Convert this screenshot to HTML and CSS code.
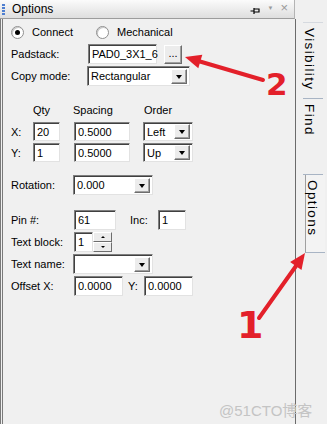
FILE: index.html
```html
<!DOCTYPE html>
<html lang="en">
<head>
    <meta charset="UTF-8">
    <meta name="viewport" content="width=device-width, initial-scale=1.0">
    <title>Options</title>
    <link rel="stylesheet" href="styles.css">
</head>
<body>
<div class="app">
    <div class="panel">
        <div class="titlebar">
            <span class="grip"></span>
            <span class="title">Options</span>
            <span class="tb-icons">
                <svg class="pin" width="10" height="8" viewBox="0 0 10 8"><path d="M0.5 4H4M4 1V7M4 2H9V5H4" fill="none" stroke="#000" stroke-width="1.2"/></svg>
                <span class="tb-arrow">▼</span>
                <span class="tb-close">×</span>
            </span>
        </div>
        <div class="content">
            <div class="row r-radio">
                <span class="radio on"></span><span class="radio-text">Connect</span>
                <span class="radio second"></span><span class="radio-text">Mechanical</span>
            </div>
            <div class="row r-pad">
                <span class="lbl l-pad">Padstack:</span>
                <span class="field f-pad">PAD0_3X1_6</span>
                <span class="btn">...</span>
            </div>
            <div class="row">
                <span class="lbl l-copy">Copy mode:</span>
                <span class="combo c-copy"><span class="combo-text">Rectangular</span><span class="drop"></span></span>
            </div>
            <div class="row r-head">
                <span class="h-qty">Qty</span>
                <span class="h-spacing">Spacing</span>
                <span class="h-order">Order</span>
            </div>
            <div class="row r-grid r-x">
                <span class="lbl l-axis">X:</span>
                <span class="field f-qty">20</span>
                <span class="field f-spacing">0.5000</span>
                <span class="combo c-order"><span class="combo-text">Left</span><span class="drop"></span></span>
            </div>
            <div class="row r-grid">
                <span class="lbl l-axis">Y:</span>
                <span class="field f-qty">1</span>
                <span class="field f-spacing">0.5000</span>
                <span class="combo c-order"><span class="combo-text">Up</span><span class="drop"></span></span>
            </div>
            <div class="row r-rot">
                <span class="lbl l-rot">Rotation:</span>
                <span class="combo c-rot"><span class="combo-text">0.000</span><span class="drop"></span></span>
            </div>
            <div class="row r-pin">
                <span class="lbl l-pin">Pin #:</span>
                <span class="field f-pin">61</span>
                <span class="lbl l-inc">Inc:</span>
                <span class="field f-inc">1</span>
            </div>
            <div class="row">
                <span class="lbl l-pin">Text block:</span>
                <span class="field f-block">1</span>
                <span class="spin"><span class="spin-up"></span><span class="spin-down"></span></span>
            </div>
            <div class="row">
                <span class="lbl l-rot">Text name:</span>
                <span class="combo c-rot"><span class="combo-text"></span><span class="drop"></span></span>
            </div>
            <div class="row">
                <span class="lbl l-pin">Offset X:</span>
                <span class="field f-off">0.0000</span>
                <span class="lbl l-offy">Y:</span>
                <span class="field f-off">0.0000</span>
            </div>
        </div>
    </div>
    <div class="tabs">
        <div class="tab t-vis"><span class="tab-text">Visibility</span></div>
        <div class="tab t-find"><span class="tab-text">Find</span></div>
        <div class="tab t-opt active"><span class="tab-text">Options</span></div>
    </div>
</div>

<!-- callouts drawn over the screenshot -->
<svg class="marks" width="327" height="424" viewBox="0 0 327 424">
    <line x1="263" y1="80" x2="200" y2="61.5" stroke="#e3202a" stroke-width="4" stroke-linecap="round"/>
    <polygon points="185,57 202.3,54.8 198.3,68.2" fill="#e3202a"/>
    <text x="266" y="95" class="num num-2">2</text>
    <line x1="259" y1="318" x2="296" y2="266" stroke="#e3202a" stroke-width="4" stroke-linecap="round"/>
    <polygon points="305,253 301.5,270.1 290.1,262.1" fill="#e3202a"/>
    <text x="237" y="338" class="num num-1">1</text>
</svg>
<div class="watermark">@51CTO博客</div>
</body>
</html>
```

FILE: styles.css
```css
body {
    margin: 0;
    width: 327px;
    height: 424px;
    overflow: hidden;
    position: relative;
    background: #f0f0f0;
    font-family: "Liberation Sans", Arial, sans-serif;
    font-size: 11px;
    color: #000;
}

.app {
    display: flex;
    height: 424px;
}

.panel {
    width: 296px;
    display: flex;
    flex-direction: column;
}

.titlebar {
    height: 18px;
    display: flex;
    align-items: center;
    background: linear-gradient(#fbfbfb, #dedede);
    border-right: 1px solid #b4b4b4;
    border-bottom: 1px solid #9c9c9c;
    margin-right: 1px;
}

.grip {
    width: 3px;
    height: 11px;
    margin-left: 2px;
    background: repeating-linear-gradient(#4f7fd0 0 2px, transparent 2px 3px);
}

.title {
    margin-left: 7px;
    font-size: 12px;
}

.tb-icons {
    margin-left: auto;
    display: flex;
    align-items: center;
    gap: 7px;
    margin-right: 6px;
}

.pin {
    margin-top: 3px;
}

.tb-arrow {
    font-size: 6px;
    color: #9a9a9a;
    margin-top: -3px;
}

.tb-close {
    font-size: 13px;
    color: #9a9a9a;
    margin-top: -3px;
}

.content {
    flex: 1;
    border-left: 3px double #7a7a7a;
    border-right: 1px solid #6b6b6b;
    padding-left: 8px;
}

.row {
    display: flex;
    align-items: center;
    height: 22px;
}

.lbl {
    flex: none;
}

.r-radio {
    height: 18px;
    margin-top: 4px;
}

.radio {
    width: 11px;
    height: 11px;
    border-radius: 50%;
    background: #fff;
    border: 1px solid #8f8f8f;
    box-shadow: inset 1px 1px 0 #c8c8c8;
    position: relative;
}

.radio.on::after {
    content: "";
    position: absolute;
    left: 3px;
    top: 3px;
    width: 5px;
    height: 5px;
    border-radius: 50%;
    background: #000;
}

.radio.second {
    margin-left: 23px;
}

.radio-text {
    margin-left: 8px;
}

.r-pad {
    margin-top: 2px;
}

.field,
.combo {
    height: 20px;
    box-sizing: border-box;
    background: #fff;
    border: 1px solid;
    border-color: #7e7e7e #e2e2e2 #e2e2e2 #7e7e7e;
    box-shadow: inset 1px 1px 0 #404040;
    display: flex;
    align-items: center;
    padding-left: 3px;
    flex: none;
}

.combo {
    padding-right: 2px;
}

.combo-text {
    flex: 1;
}

.drop {
    width: 16px;
    height: 15px;
    box-sizing: border-box;
    background: #ececec;
    border: 1px solid;
    border-color: #fff #6d6d6d #6d6d6d #fff;
    box-shadow: inset -1px -1px 0 #a0a0a0;
    position: relative;
}

.drop::after {
    content: "";
    position: absolute;
    left: 4px;
    top: 5px;
    border-left: 3.5px solid transparent;
    border-right: 3.5px solid transparent;
    border-top: 4px solid #000;
}

.l-pad {
    width: 77px;
}

.f-pad {
    width: 69px;
}

.btn {
    width: 18px;
    height: 19px;
    box-sizing: border-box;
    margin-left: 7px;
    background: #ececec;
    border: 1px solid;
    border-color: #fff #6d6d6d #6d6d6d #fff;
    box-shadow: inset -1px -1px 0 #a0a0a0;
    text-align: center;
    line-height: 14px;
}

.l-copy {
    width: 76px;
}

.c-copy {
    width: 103px;
}

.r-head {
    height: 14px;
    margin-top: 16px;
}

.h-qty {
    margin-left: 22px;
    width: 40px;
}

.h-spacing {
    width: 71px;
}

.r-x {
    margin-top: 4px;
}

.r-grid {
    height: 21px;
}

.r-grid .field,
.r-grid .combo {
    height: 19px;
}

.l-axis {
    width: 22px;
}

.f-qty {
    width: 27px;
}

.f-spacing {
    width: 56px;
    margin-left: 14px;
}

.c-order {
    width: 50px;
    margin-left: 13px;
}

.r-rot {
    margin-top: 11px;
}

.l-rot {
    width: 62px;
}

.c-rot {
    width: 80px;
}

.r-pin {
    margin-top: 13px;
}

.l-pin {
    width: 63px;
}

.f-pin {
    width: 42px;
}

.l-inc {
    width: 28px;
    margin-left: 14px;
}

.f-inc {
    width: 28px;
}

.f-block {
    width: 19px;
}

.spin {
    width: 19px;
    height: 20px;
    display: flex;
    flex-direction: column;
}

.spin-up,
.spin-down {
    flex: 1;
    background: #ececec;
    border: 1px solid;
    border-color: #fff #6d6d6d #6d6d6d #fff;
    position: relative;
}

.spin-up::after,
.spin-down::after {
    content: "";
    position: absolute;
    left: 7px;
    top: 3px;
    border-left: 2px solid transparent;
    border-right: 2px solid transparent;
}

.spin-up::after {
    border-bottom: 2px solid #000;
}

.spin-down::after {
    border-top: 2px solid #000;
    top: 3px;
}

.f-off {
    width: 49px;
}

.l-offy {
    width: 16px;
    margin-left: 5px;
}

.tabs {
    flex: 1;
    padding-top: 22px;
    padding-left: 7px;
}

.tab {
    width: 20px;
    border-top: 1px solid #d5d9df;
    border-bottom: 1px solid #a8b4c4;
    box-sizing: border-box;
    padding-top: 5px;
}

.tab + .tab {
    border-top: none;
}

.t-vis {
    height: 77px;
}

.t-find {
    height: 76px;
}

.t-opt {
    height: 78px;
}

.tab.active {
    border-left: 1px solid #a0a0a0;
    margin-left: 2px;
    background: #f3f3f3;
}

.tab-text {
    writing-mode: vertical-rl;
    font-size: 13.5px;
    letter-spacing: 1.4px;
    line-height: 12px;
}

.marks {
    position: absolute;
    left: 0;
    top: 0;
    pointer-events: none;
}

.num {
    font-family: "DejaVu Sans", sans-serif;
    font-weight: bold;
    fill: #e3202a;
}

.num-2 {
    font-size: 31px;
}

.num-1 {
    font-size: 38px;
}

.watermark {
    position: absolute;
    left: 219px;
    top: 399px;
    font-family: "Liberation Sans", "Noto Sans CJK SC", sans-serif;
    font-size: 15px;
    color: #c4c4c4;
}
```
